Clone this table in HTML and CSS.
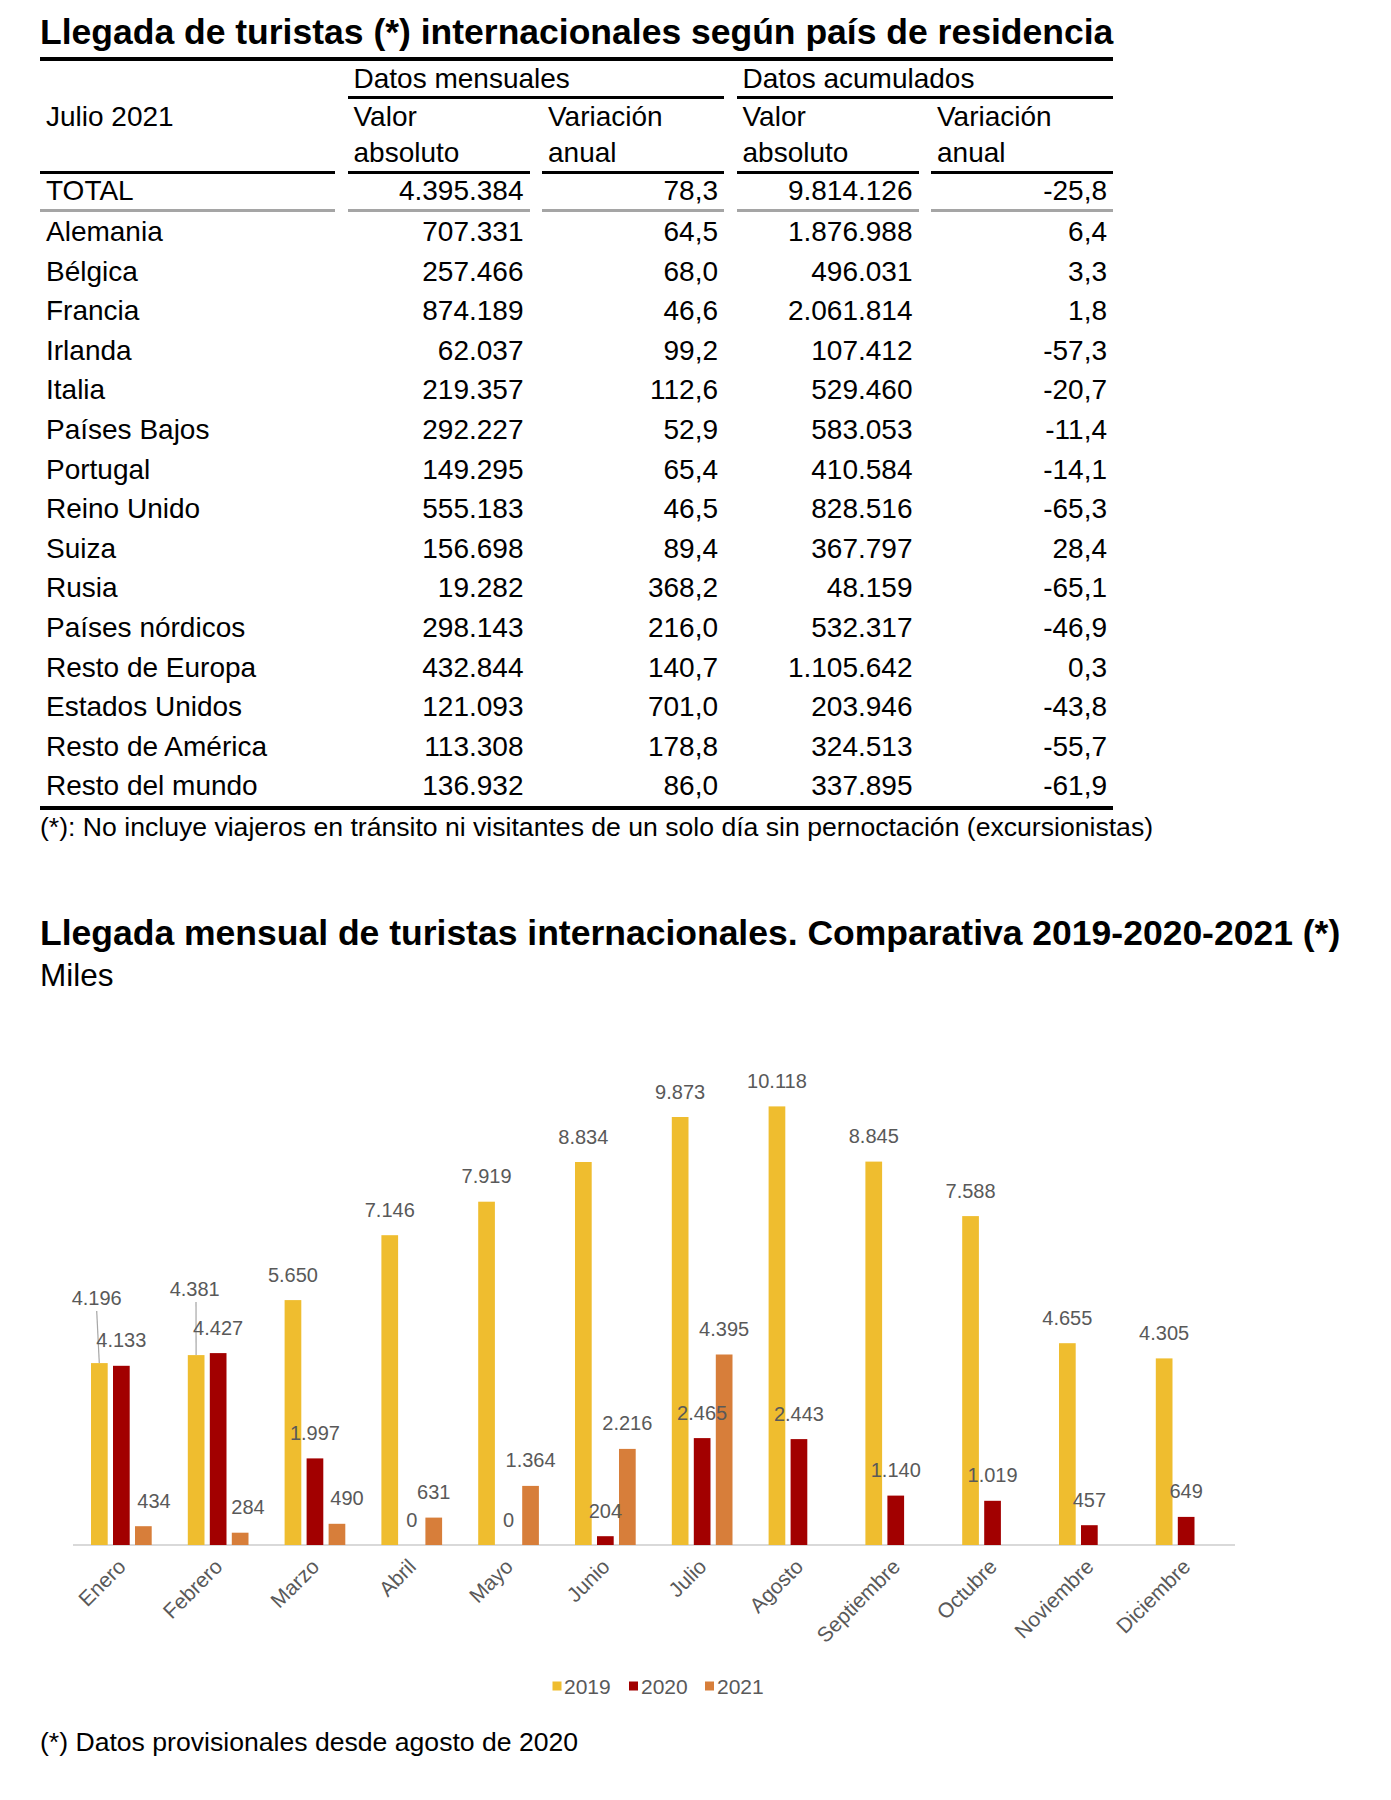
FILE: index.html
```html
<!DOCTYPE html>
<html lang="es">
<head>
<meta charset="utf-8">
<title>Llegada de turistas internacionales</title>
<link rel="stylesheet" href="styles.css">
</head>
<body>
<main class="page">
  <section class="table-section">
    <h1 class="title title-table">Llegada de turistas (*) internacionales según país de residencia</h1>
    <div class="tbl">
      <div class="cell blank"></div>
      <div class="cell group">Datos mensuales</div>
      <div class="cell group">Datos acumulados</div>

      <div class="cell head">Julio 2021</div>
      <div class="cell head">Valor<br>absoluto</div>
      <div class="cell head">Variación<br>anual</div>
      <div class="cell head">Valor<br>absoluto</div>
      <div class="cell head">Variación<br>anual</div>

      <div class="cell total">TOTAL</div>
      <div class="cell total num">4.395.384</div>
      <div class="cell total num">78,3</div>
      <div class="cell total num">9.814.126</div>
      <div class="cell total num">-25,8</div>

      <div class="cell row">Alemania</div><div class="cell row num">707.331</div><div class="cell row num">64,5</div><div class="cell row num">1.876.988</div><div class="cell row num">6,4</div>
      <div class="cell row">Bélgica</div><div class="cell row num">257.466</div><div class="cell row num">68,0</div><div class="cell row num">496.031</div><div class="cell row num">3,3</div>
      <div class="cell row">Francia</div><div class="cell row num">874.189</div><div class="cell row num">46,6</div><div class="cell row num">2.061.814</div><div class="cell row num">1,8</div>
      <div class="cell row">Irlanda</div><div class="cell row num">62.037</div><div class="cell row num">99,2</div><div class="cell row num">107.412</div><div class="cell row num">-57,3</div>
      <div class="cell row">Italia</div><div class="cell row num">219.357</div><div class="cell row num">112,6</div><div class="cell row num">529.460</div><div class="cell row num">-20,7</div>
      <div class="cell row">Países Bajos</div><div class="cell row num">292.227</div><div class="cell row num">52,9</div><div class="cell row num">583.053</div><div class="cell row num">-11,4</div>
      <div class="cell row">Portugal</div><div class="cell row num">149.295</div><div class="cell row num">65,4</div><div class="cell row num">410.584</div><div class="cell row num">-14,1</div>
      <div class="cell row">Reino Unido</div><div class="cell row num">555.183</div><div class="cell row num">46,5</div><div class="cell row num">828.516</div><div class="cell row num">-65,3</div>
      <div class="cell row">Suiza</div><div class="cell row num">156.698</div><div class="cell row num">89,4</div><div class="cell row num">367.797</div><div class="cell row num">28,4</div>
      <div class="cell row">Rusia</div><div class="cell row num">19.282</div><div class="cell row num">368,2</div><div class="cell row num">48.159</div><div class="cell row num">-65,1</div>
      <div class="cell row">Países nórdicos</div><div class="cell row num">298.143</div><div class="cell row num">216,0</div><div class="cell row num">532.317</div><div class="cell row num">-46,9</div>
      <div class="cell row">Resto de Europa</div><div class="cell row num">432.844</div><div class="cell row num">140,7</div><div class="cell row num">1.105.642</div><div class="cell row num">0,3</div>
      <div class="cell row">Estados Unidos</div><div class="cell row num">121.093</div><div class="cell row num">701,0</div><div class="cell row num">203.946</div><div class="cell row num">-43,8</div>
      <div class="cell row">Resto de América</div><div class="cell row num">113.308</div><div class="cell row num">178,8</div><div class="cell row num">324.513</div><div class="cell row num">-55,7</div>
      <div class="cell row">Resto del mundo</div><div class="cell row num">136.932</div><div class="cell row num">86,0</div><div class="cell row num">337.895</div><div class="cell row num">-61,9</div>
    </div>
    <p class="note">(*): No incluye viajeros en tránsito ni visitantes de un solo día sin pernoctación (excursionistas)</p>
  </section>

  <section class="chart-section">
    <h2 class="title title-chart">Llegada mensual de turistas internacionales. Comparativa 2019-2020-2021 (*)</h2>
    <p class="unit">Miles</p>
    <svg class="chart" viewBox="0 992 1391 733" width="1391" height="733" xmlns="http://www.w3.org/2000/svg">
      <line class="axis" x1="73" y1="1545" x2="1235" y2="1545"/>

      <!-- 2019 -->
      <rect class="b19" x="91" y="1363.1" width="16.7" height="181.9"/>
      <rect class="b19" x="187.8" y="1355.1" width="16.7" height="189.9"/>
      <rect class="b19" x="284.6" y="1300.1" width="16.7" height="244.9"/>
      <rect class="b19" x="381.4" y="1235.2" width="16.7" height="309.8"/>
      <rect class="b19" x="478.2" y="1201.7" width="16.7" height="343.3"/>
      <rect class="b19" x="575" y="1162" width="16.7" height="383"/>
      <rect class="b19" x="671.8" y="1117" width="16.7" height="428"/>
      <rect class="b19" x="768.6" y="1106.4" width="16.7" height="438.6"/>
      <rect class="b19" x="865.4" y="1161.6" width="16.7" height="383.4"/>
      <rect class="b19" x="962.2" y="1216.1" width="16.7" height="328.9"/>
      <rect class="b19" x="1059" y="1343.2" width="16.7" height="201.8"/>
      <rect class="b19" x="1155.8" y="1358.4" width="16.7" height="186.6"/>

      <!-- 2020 -->
      <rect class="b20" x="113" y="1365.8" width="16.7" height="179.2"/>
      <rect class="b20" x="209.8" y="1353.1" width="16.7" height="191.9"/>
      <rect class="b20" x="306.6" y="1458.4" width="16.7" height="86.6"/>
      <rect class="b20" x="597" y="1536.2" width="16.7" height="8.8"/>
      <rect class="b20" x="693.8" y="1438.1" width="16.7" height="106.9"/>
      <rect class="b20" x="790.6" y="1439.1" width="16.7" height="105.9"/>
      <rect class="b20" x="887.4" y="1495.6" width="16.7" height="49.4"/>
      <rect class="b20" x="984.2" y="1500.8" width="16.7" height="44.2"/>
      <rect class="b20" x="1081" y="1525.2" width="16.7" height="19.8"/>
      <rect class="b20" x="1177.8" y="1516.9" width="16.7" height="28.1"/>

      <!-- 2021 -->
      <rect class="b21" x="135" y="1526.2" width="16.7" height="18.8"/>
      <rect class="b21" x="231.8" y="1532.7" width="16.7" height="12.3"/>
      <rect class="b21" x="328.6" y="1523.8" width="16.7" height="21.2"/>
      <rect class="b21" x="425.4" y="1517.6" width="16.7" height="27.4"/>
      <rect class="b21" x="522.2" y="1485.9" width="16.7" height="59.1"/>
      <rect class="b21" x="619" y="1448.9" width="16.7" height="96.1"/>
      <rect class="b21" x="715.8" y="1354.5" width="16.7" height="190.5"/>

      <!-- leader lines -->
      <line class="leader" x1="96.7" y1="1311" x2="99.3" y2="1363"/>
      <line class="leader" x1="196" y1="1302" x2="196.1" y2="1355"/>

      <!-- value labels -->
      <g class="val">
        <text x="96.7" y="1305">4.196</text>
        <text x="121.35" y="1347.3">4.133</text>
        <text x="154" y="1507.7">434</text>
        <text x="194.7" y="1296">4.381</text>
        <text x="218.15" y="1334.6">4.427</text>
        <text x="248" y="1514.2">284</text>
        <text x="292.95" y="1281.6">5.650</text>
        <text x="314.95" y="1439.9">1.997</text>
        <text x="347" y="1505.3">490</text>
        <text x="389.75" y="1216.7">7.146</text>
        <text x="411.75" y="1526.5">0</text>
        <text x="433.75" y="1499.1">631</text>
        <text x="486.55" y="1183.2">7.919</text>
        <text x="508.55" y="1526.5">0</text>
        <text x="530.55" y="1467.4">1.364</text>
        <text x="583.35" y="1143.5">8.834</text>
        <text x="605.35" y="1517.7">204</text>
        <text x="627.35" y="1430.4">2.216</text>
        <text x="680.15" y="1098.5">9.873</text>
        <text x="702.15" y="1419.6">2.465</text>
        <text x="724.15" y="1336">4.395</text>
        <text x="776.95" y="1087.9">10.118</text>
        <text x="798.95" y="1420.6">2.443</text>
        <text x="873.75" y="1143.1">8.845</text>
        <text x="895.75" y="1477.1">1.140</text>
        <text x="970.55" y="1197.6">7.588</text>
        <text x="992.55" y="1482.3">1.019</text>
        <text x="1067.35" y="1324.7">4.655</text>
        <text x="1089.35" y="1506.7">457</text>
        <text x="1164.15" y="1339.9">4.305</text>
        <text x="1186.15" y="1498.4">649</text>
      </g>

      <!-- month labels -->
      <g class="month">
        <text transform="translate(127 1568) rotate(-45)">Enero</text>
        <text transform="translate(223.8 1568) rotate(-45)">Febrero</text>
        <text transform="translate(320.6 1568) rotate(-45)">Marzo</text>
        <text transform="translate(417.4 1568) rotate(-45)">Abril</text>
        <text transform="translate(514.2 1568) rotate(-45)">Mayo</text>
        <text transform="translate(611 1568) rotate(-45)">Junio</text>
        <text transform="translate(707.8 1568) rotate(-45)">Julio</text>
        <text transform="translate(804.6 1568) rotate(-45)">Agosto</text>
        <text transform="translate(901.4 1568) rotate(-45)">Septiembre</text>
        <text transform="translate(998.2 1568) rotate(-45)">Octubre</text>
        <text transform="translate(1095 1568) rotate(-45)">Noviembre</text>
        <text transform="translate(1191.8 1568) rotate(-45)">Diciembre</text>
      </g>

      <!-- legend -->
      <g class="legend">
        <rect class="b19" x="552.5" y="1681.5" width="9" height="9"/>
        <text x="564" y="1693.5">2019</text>
        <rect class="b20" x="629" y="1681.5" width="9" height="9"/>
        <text x="641" y="1693.5">2020</text>
        <rect class="b21" x="705" y="1681.5" width="9" height="9"/>
        <text x="717" y="1693.5">2021</text>
      </g>
    </svg>
    <p class="note">(*) Datos provisionales desde agosto de 2020</p>
  </section>
</main>
</body>
</html>
```

FILE: styles.css
```css
html, body {
  margin: 0;
  padding: 0;
  background: #ffffff;
}

body {
  font-family: "Liberation Sans", Arial, Helvetica, sans-serif;
  color: #000000;
}

.page {
  padding-top: 8px;
}

.title {
  margin: 0 0 0 40px;
  font-size: 35.5px;
  font-weight: bold;
  line-height: 49px;
  white-space: nowrap;
}

.title-table {
  width: 1073px;
  border-bottom: 4px solid #000000;
}

.title-chart {
  margin-top: 65px;
}

.tbl {
  margin-left: 40px;
  width: 1073px;
  display: grid;
  grid-template-columns: 295px repeat(4, 182px);
  column-gap: 12.5px;
  font-size: 28px;
  border-bottom: 4px solid #000000;
}

.cell {
  padding: 0 6px;
  white-space: nowrap;
}

.blank {
  line-height: 35px;
}

.group {
  grid-column: span 2;
  line-height: 35px;
  border-bottom: 3px solid #000000;
}

.head {
  line-height: 36px;
  border-bottom: 3px solid #000000;
}

.total {
  line-height: 33px;
  padding-bottom: 2px;
  border-bottom: 3px solid #a5a5a5;
}

.row {
  line-height: 39.6px;
}

.num {
  text-align: right;
}

.note {
  margin: 0 0 0 40px;
  font-size: 26.6px;
  line-height: 34px;
  white-space: nowrap;
}

.unit {
  margin: 0 0 0 40px;
  font-size: 31.5px;
  line-height: 34px;
}

.chart {
  display: block;
  width: 1391px;
  height: 733px;
}

.axis {
  stroke: #d9d9d9;
  stroke-width: 2;
}

.b19 {
  fill: #efbd2f;
}

.b20 {
  fill: #a20000;
}

.b21 {
  fill: #d77e3a;
}

.leader {
  stroke: #a6a6a6;
  stroke-width: 1.2;
}

.val text {
  font-family: "Liberation Sans", Arial, sans-serif;
  font-size: 20px;
  fill: #595959;
  text-anchor: middle;
}

.month text {
  font-family: "Liberation Sans", Arial, sans-serif;
  font-size: 21px;
  fill: #595959;
  text-anchor: end;
}

.legend text {
  font-family: "Liberation Sans", Arial, sans-serif;
  font-size: 21px;
  fill: #595959;
}
```
